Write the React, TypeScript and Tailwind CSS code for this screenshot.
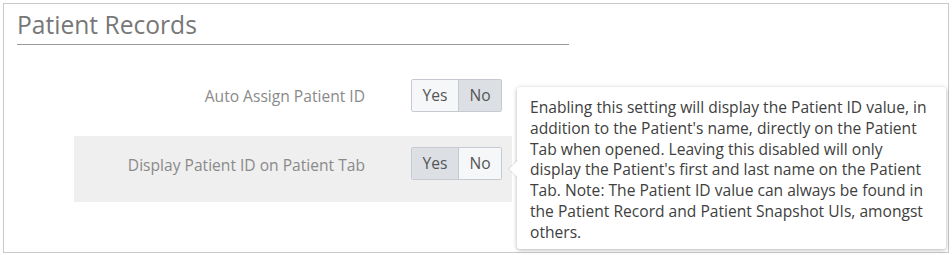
import React from 'react';

const font = { fontFamily: '"Open Sans", "Noto Sans", sans-serif' };

interface ToggleProps {
  value: boolean;
}

const YesNo: React.FC<ToggleProps> = ({ value }) => {
  return (
    <div className="flex h-[33px] w-[91px] shrink-0 rounded-[2px] border border-[#c6cad0] text-[15.6px] text-[#555]">
      <button
        className={`flex w-[47px] items-center justify-center border-r border-[#c6cad0] ${
          value ? 'bg-[#dce0e5]' : 'bg-[#f6f7f9]'
        }`}
      >
        Yes
      </button>
      <button
        className={`flex flex-1 items-center justify-center ${value ? 'bg-[#f6f7f9]' : 'bg-[#dce0e5]'}`}
      >
        No
      </button>
    </div>
  );
};

const helpLines = [
  'Enabling this setting will display the Patient ID value, in',
  "addition to the Patient's name, directly on the Patient",
  'Tab when opened. Leaving this disabled will only',
  "display the Patient's first and last name on the Patient",
  'Tab. Note: The Patient ID value can always be found in',
  'the Patient Record and Patient Snapshot UIs, amongst',
  'others.',
];

export default function App() {
  return (
    <div className="h-[255px] w-[952px] bg-white pl-[3px] pt-[3px]" style={font}>
      <div className="relative h-[250px] w-[946px] border border-[#c9c9c9]">
        {/* Section header */}
        <div className="ml-[13px] w-[552px] border-b border-[#9a9a9a] pt-[6px] pb-[4px]">
          <h2 className="text-[24.6px] leading-[30px] font-normal text-[#777]">Patient Records</h2>
        </div>

        {/* Settings rows */}
        <div className="mt-[34px] ml-[70px] w-[438px]">
          <div className="flex items-center pr-[10px]">
            <div className="w-[291px] pt-[3px] text-right text-[15.6px] text-[#8a8a8a]">Auto Assign Patient ID</div>
            <div className="ml-[46px]">
              <YesNo value={false} />
            </div>
          </div>
          <div className="mt-[24px] flex items-center bg-[#efefef] pt-[11px] pb-[22px] pr-[10px]">
            <div className="w-[291px] pt-[5px] text-right text-[15.6px] text-[#8a8a8a]">
              Display Patient ID on Patient Tab
            </div>
            <div className="ml-[46px]">
              <YesNo value={true} />
            </div>
          </div>
        </div>

        {/* Help tooltip */}
        <div className="absolute left-[513px] top-[83px] h-[162px] w-[429px] rounded-[3px] bg-white pt-[10px] pl-[13px] pr-[6px] text-[15.6px] leading-[20.8px] whitespace-nowrap text-[#404040] shadow-[0_1px_4px_rgba(0,0,0,0.3)]">
          <div className="absolute left-[-9px] top-[73px] h-0 w-0 border-y-[9px] border-r-[9px] border-y-transparent border-r-[rgba(0,0,0,0.12)]" />
          <div className="absolute left-[-8px] top-[73px] h-0 w-0 border-y-[9px] border-r-[9px] border-y-transparent border-r-white" />
          {helpLines.map((line) => (
            <div key={line}>{line}</div>
          ))}
        </div>
      </div>
    </div>
  );
}
